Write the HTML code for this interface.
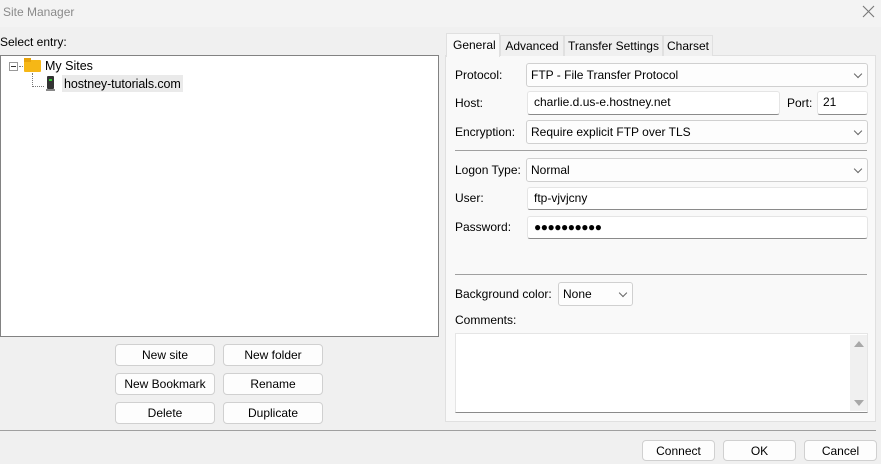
<!DOCTYPE html>
<html><head><meta charset="utf-8"><style>
*{box-sizing:border-box;margin:0;padding:0}
body{width:881px;height:464px;background:#f0f0f0;font-family:"Liberation Sans",sans-serif;font-size:12px;color:#000;position:relative;overflow:hidden}
.a{position:absolute}
.t{position:absolute;white-space:nowrap;line-height:14px}
.inp{position:absolute;background:#fff;border:1px solid #e5e5e5;border-bottom:1px solid #8a8a8a;border-radius:3px;padding-left:6px;line-height:20px;white-space:nowrap}
.sel{position:absolute;background:#fdfdfd;border:1px solid #d0d0d0;border-radius:3px;padding-left:4px;line-height:23px;white-space:nowrap}
.sel:after{content:"";position:absolute;right:6px;top:7px;width:5px;height:5px;border-right:1px solid #666;border-bottom:1px solid #666;transform:rotate(45deg)}
.btn{position:absolute;background:#fdfdfd;border:1px solid #d0d0d0;border-radius:4px;text-align:center;line-height:20px;white-space:nowrap}
.tab{position:absolute;border:1px solid #e0e0e0;border-bottom:none;background:#f0f0f0;text-align:center;line-height:20px;top:35px;height:21px}
</style></head><body>
<div class="a" style="left:0;top:0;width:881px;height:27px;background:#f3f3f3"></div>
<div class="t" style="left:3px;top:5px;color:#8a8a8a;font-size:12px">Site Manager</div>
<svg class="a" style="left:862px;top:5px" width="13" height="13"><path d="M1 1L12 12M12 1L1 12" stroke="#777" stroke-width="1.1"/></svg>
<div class="t" style="left:0;top:35px">Select entry:</div>
<div class="a" style="left:0;top:55px;width:439px;height:282px;background:#fff;border:1px solid #828282"></div>
<div class="a" style="left:9px;top:62px;width:9px;height:9px;border:1px solid #999;background:#fff"></div>
<div class="a" style="left:11px;top:66px;width:5px;height:1px;background:#333"></div>
<div class="a" style="left:19px;top:66px;width:6px;border-top:1px dotted #777"></div>
<div class="a" style="left:24px;top:60px;width:17px;height:12px;background:#f6b716;border-radius:1px"></div>
<div class="a" style="left:24px;top:58px;width:7px;height:4px;background:#e7a20a"></div>
<div class="t" style="left:45px;top:59px;font-size:12.5px">My Sites</div>
<div class="a" style="left:32px;top:73px;height:12px;border-left:1px dotted #777"></div>
<div class="a" style="left:32px;top:86px;width:12px;border-top:1px dotted #777"></div>
<div class="a" style="left:47px;top:76px;width:7px;height:13px;background:#333;border-radius:1px"></div>
<div class="a" style="left:49px;top:79px;width:3px;height:2px;background:#3c3"></div>
<div class="a" style="left:46px;top:89px;width:9px;height:2px;background:#888"></div>
<div class="a" style="left:62px;top:75px;width:121px;height:17px;background:#eaeaea"></div>
<div class="t" style="left:64px;top:77px;font-size:12.5px;letter-spacing:-0.1px">hostney-tutorials.com</div>
<div class="btn" style="left:115px;top:344px;width:100px;height:22px">New site</div>
<div class="btn" style="left:223px;top:344px;width:100px;height:22px">New folder</div>
<div class="btn" style="left:115px;top:373px;width:100px;height:22px">New Bookmark</div>
<div class="btn" style="left:223px;top:373px;width:100px;height:22px">Rename</div>
<div class="btn" style="left:115px;top:402px;width:100px;height:22px">Delete</div>
<div class="btn" style="left:223px;top:402px;width:100px;height:22px">Duplicate</div>
<div class="a" style="left:445px;top:55px;width:431px;height:367px;background:#f9f9f9;border:1px solid #e0e0e0"></div>
<div class="tab" style="left:500px;width:64px">Advanced</div>
<div class="tab" style="left:564px;width:99px">Transfer Settings</div>
<div class="tab" style="left:663px;width:50px">Charset</div>
<div class="a" style="left:446px;top:33px;width:54px;height:24px;background:#f9f9f9;border:1px solid #e0e0e0;border-bottom:none"></div>
<div class="t" style="left:453px;top:38px">General</div>
<div class="t" style="left:455px;top:68px">Protocol:</div>
<div class="sel" style="left:526px;top:63px;width:342px;height:24px">FTP - File Transfer Protocol</div>
<div class="t" style="left:455px;top:96px">Host:</div>
<div class="inp" style="left:527px;top:91px;width:253px;height:24px;line-height:21px">charlie.d.us-e.hostney.net</div>
<div class="t" style="left:787px;top:96px">Port:</div>
<div class="inp" style="left:817px;top:91px;width:51px;height:24px;padding-left:5px;line-height:21px">21</div>
<div class="t" style="left:455px;top:125px">Encryption:</div>
<div class="sel" style="left:526px;top:120px;width:342px;height:24px">Require explicit FTP over TLS</div>
<div class="a" style="left:455px;top:150px;width:412px;height:1px;background:#a0a0a0"></div>
<div class="t" style="left:455px;top:163px">Logon Type:</div>
<div class="sel" style="left:526px;top:158px;width:342px;height:24px">Normal</div>
<div class="t" style="left:455px;top:191px">User:</div>
<div class="inp" style="left:527px;top:187px;width:341px;height:23px">ftp-vjvjcny</div>
<div class="t" style="left:455px;top:220px">Password:</div>
<div class="inp" style="left:527px;top:216px;width:341px;height:23px;letter-spacing:-0.5px;font-size:12px">●●●●●●●●●●</div>
<div class="a" style="left:455px;top:274px;width:412px;height:1px;background:#a0a0a0"></div>
<div class="t" style="left:455px;top:287px">Background color:</div>
<div class="sel" style="left:558px;top:282px;width:75px;height:24px">None</div>
<div class="t" style="left:455px;top:313px">Comments:</div>
<div class="a" style="left:455px;top:333px;width:413px;height:80px;background:#fff;border:1px solid #e5e5e5;border-bottom:1px solid #8a8a8a"></div>
<div class="a" style="left:850px;top:335px;width:17px;height:76px;background:#f0f0f0"></div>
<div class="a" style="left:854px;top:341px;border-left:5px solid transparent;border-right:5px solid transparent;border-bottom:6px solid #a8a8a8"></div>
<div class="a" style="left:854px;top:400px;border-left:5px solid transparent;border-right:5px solid transparent;border-top:6px solid #a8a8a8"></div>
<div class="a" style="left:0;top:430px;width:876px;height:1px;background:#a0a0a0"></div>
<div class="btn" style="left:642px;top:440px;width:73px;height:21px">Connect</div>
<div class="btn" style="left:723px;top:440px;width:73px;height:21px">OK</div>
<div class="btn" style="left:804px;top:440px;width:73px;height:21px">Cancel</div>
</body></html>
